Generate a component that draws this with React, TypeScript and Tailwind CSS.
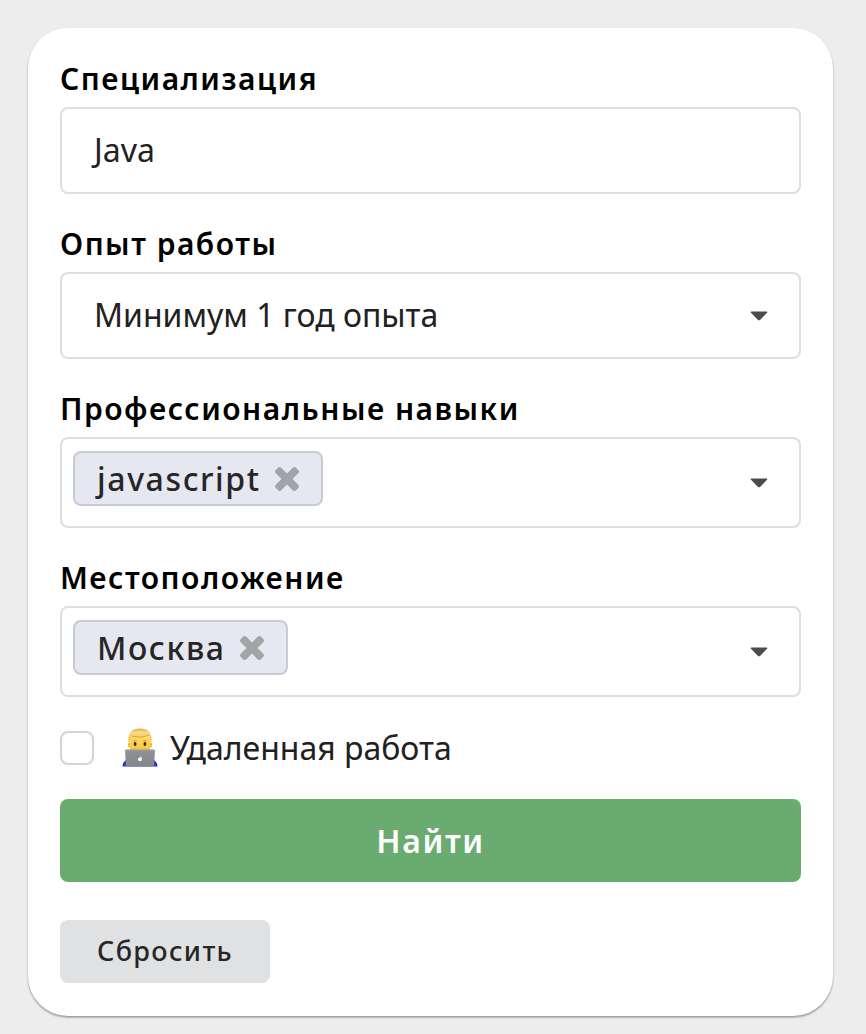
import { useState, type ReactNode } from "react";

function Caret() {
  return (
    <svg viewBox="0 0 18 10" className="h-[10px] w-[18px] fill-[#4c4c4c]" aria-hidden="true">
      <path d="M1.6 0.5H16.4Q17.5 0.5 17.3 1.3Q17.2 1.7 16.8 2.1L10 8.9Q9 9.8 8 8.9L1.2 2.1Q0.8 1.7 0.7 1.3Q0.5 0.5 1.6 0.5Z" />
    </svg>
  );
}

function Cross() {
  return (
    <svg viewBox="302 366 1188 1188" className="size-6 fill-[#a2a3a7]" aria-hidden="true">
      <path d="M1490 1322q0 40-28 68l-136 136q-28 28-68 28t-68-28l-294-294-294 294q-28 28-68 28t-68-28l-136-136q-28-28-28-68t28-68l294-294-294-294q-28-28-28-68t28-68l136-136q28-28 68-28t68 28l294 294 294-294q28-28 68-28t68 28l136 136q28 28 28 68t-28 68l-294 294 294 294q28 28 28 68z" />
    </svg>
  );
}

function Technologist() {
  return (
    <svg viewBox="0 0 36 40" className="h-10 w-9 shrink-0" aria-hidden="true">
      <defs>
        <linearGradient id="skin" x1="0" y1="0" x2="0" y2="1">
          <stop offset="0" stopColor="#ffdf62" />
          <stop offset="1" stopColor="#f5b93c" />
        </linearGradient>
        <linearGradient id="hair" x1="0" y1="0" x2="0" y2="1">
          <stop offset="0" stopColor="#e3ab45" />
          <stop offset="0.3" stopColor="#fbdc83" />
          <stop offset="1" stopColor="#f0bb52" />
        </linearGradient>
        <linearGradient id="lid" x1="0" y1="0" x2="0" y2="1">
          <stop offset="0" stopColor="#919295" />
          <stop offset="1" stopColor="#858689" />
        </linearGradient>
      </defs>
      <path d="M0.5 38.5Q0.500 34 4 32H32Q35.5 34 35.5 38.5Z" fill="#2733cf" />
      <ellipse cx="7.4" cy="17" rx="1.5" ry="2.8" fill="#f2b83c" />
      <ellipse cx="28.6" cy="17" rx="1.5" ry="2.8" fill="#f2b83c" />
      <path d="M7.6 9Q18 5 28.4 9V19Q27 27 18 28Q9 27 7.6 19Z" fill="url(#skin)" />
      <path d="M6.3 13.500Q5.500 0.500 18 0.500Q30.500 0.500 29.700 13.500L28.700 14Q28.400 10 26.800 7.200Q19 10.600 10.200 8.200Q8 10 7.300 14Z" fill="url(#hair)" />
      <path d="M10.200 8.300Q19 10.700 26.800 7.300" fill="none" stroke="#c98c2e" strokeWidth="0.7" />
      <path d="M11.5 13.200Q12.800 12.200 14.600 12.700M21.400 12.700Q23.200 12.200 24.500 13.200" fill="none" stroke="#b67c20" strokeWidth="0.7" />
      <ellipse cx="13.100" cy="16" rx="1.400" ry="1.900" fill="#3a240f" />
      <ellipse cx="22.900" cy="16" rx="1.400" ry="1.900" fill="#3a240f" />
      <path d="M4.500 21.500H31.500Q33 21.500 33 23L32 38.500H4L3 23Q3 21.500 4.500 21.500Z" fill="url(#lid)" />
      <path d="M3.600 21.900H32.400" stroke="#aeb0b3" strokeWidth="0.7" />
      <path d="M18 29.700Q19.700 28.800 20 30Q19.200 31 20.100 31.900Q19.400 33.500 18 32.900Q16.500 33.500 16 31.500Q16 29.100 18 29.700ZM18 29.200Q18 28.200 19.100 27.900Q19.100 29 18 29.200Z" fill="#f9f9fa" />
    </svg>
  );
}

const boxStyle = "rounded-lg border-2 border-[#dededf] bg-white text-[32px] text-[#212121]";

function Field({ id, label, children }: { id: string; label: string; children: ReactNode }) {
  return (
    <div className="flex flex-col gap-2">
      <label htmlFor={id} className="text-[30px] leading-10 font-semibold tracking-wider text-black">
        {label}
      </label>
      {children}
    </div>
  );
}

function TagPicker({ id, initial }: { id: string; initial: string[] }) {
  const [tags, setTags] = useState(initial);
  return (
    <div className={`${boxStyle} flex h-[91px] items-center pr-[31px] pl-[11px]`}>
      <div className="flex min-w-0 flex-1 gap-2 self-start pt-3">
        {tags.map((tag) => (
          <span
            key={tag}
            className="flex h-[55px] items-center gap-[14px] rounded-lg border-2 border-[#c8cad5] bg-[#e6e8f1] px-[22px] font-medium tracking-wider text-[#262627]"
          >
            {tag}
            <button type="button" aria-label={`Удалить ${tag}`} onClick={() => setTags(tags.filter((t) => t !== tag))}>
              <Cross />
            </button>
          </span>
        ))}
        <input id={id} type="text" className="min-w-0 flex-1 bg-transparent outline-none" />
      </div>
      <button type="button" aria-label="Открыть список">
        <Caret />
      </button>
    </div>
  );
}

export default function App() {
  return (
    <main className="min-h-screen bg-[#ededed] pt-7 pr-[33px] pb-[18px] pl-7 font-['Noto_Sans',sans-serif]">
      <form
        onSubmit={(e) => e.preventDefault()}
        className="flex flex-col gap-[30px] rounded-[40px] bg-white px-8 pt-[31px] pb-[33px] shadow-[0_2px_2px_rgba(0,0,0,0.2),0_1px_2px_rgba(0,0,0,0.2)]"
      >
        <Field id="specialization" label="Специализация">
          <input
            id="specialization"
            type="text"
            defaultValue="Java"
            className={`${boxStyle} h-[87px] w-full pr-8 pb-[2px] pl-6 indent-2 outline-none`}
          />
        </Field>

        <Field id="experience" label="Опыт работы">
          <div className="relative">
            <select id="experience" className={`${boxStyle} h-[87px] w-full appearance-none pr-16 pb-[2px] pl-8 outline-none`}>
              <option>Минимум 1 год опыта</option>
            </select>
            <span className="pointer-events-none absolute inset-y-0 right-[33px] flex items-center">
              <Caret />
            </span>
          </div>
        </Field>

        <Field id="skills" label="Профессиональные навыки">
          <TagPicker id="skills" initial={["javascript"]} />
        </Field>

        <Field id="location" label="Местоположение">
          <TagPicker id="location" initial={["Москва"]} />
        </Field>

        <label className="flex h-[42px] items-center text-[32px] text-[#212121]">
          <input type="checkbox" className="mr-7 size-[34px] shrink-0 appearance-none rounded-lg border-2 border-[#d4d4d5] bg-white checked:bg-[#6aab6f]" />
          <Technologist />
          <span className="ml-3">Удаленная работа</span>
        </label>

        <button type="submit" className="h-[83px] rounded-lg bg-[#6aab6f] text-[32px] font-semibold tracking-wider text-white">
          Найти
        </button>

        <button type="reset" className="mt-2 h-[63px] self-start rounded-lg bg-[#e0e1e2] px-[37px] text-[27px] font-medium tracking-wider text-[#262627]">
          Сбросить
        </button>
      </form>
    </main>
  );
}
